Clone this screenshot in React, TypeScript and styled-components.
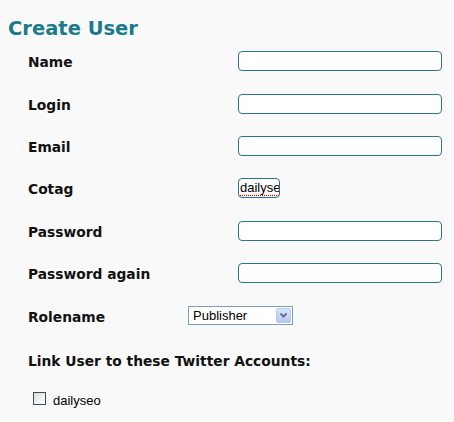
import React from "react";
import styled, { createGlobalStyle } from "styled-components";

const Global = createGlobalStyle`
  html, body { margin: 0; padding: 0; background: #f9f9f9; }
  body { font-family: "DejaVu Sans", Verdana, sans-serif; }
`;

const Page = styled.div`
  width: 454px;
  height: 422px;
  padding: 19px 0 0 8px;
  box-sizing: border-box;
  overflow: hidden;
`;

const Title = styled.h1`
  margin: 0 0 1px 0;
  font-family: "DejaVu Sans", Verdana, sans-serif;
  font-weight: bold;
  font-size: 19.5px;
  line-height: 20px;
  color: #1b7a8b;
`;

const Form = styled.div`
  padding-left: 20px;
  display: flex;
  flex-direction: column;
`;

const Row = styled.div<{ $labelWidth: number }>`
  height: 42.4px;
  display: grid;
  grid-template-columns: ${(p) => p.$labelWidth}px auto;
  align-items: center;
`;

const Label = styled.span`
  padding-top: 2px;
  font-family: "DejaVu Sans", Verdana, sans-serif;
  font-weight: bold;
  font-size: 13.8px;
  color: #111;
`;

const TextBox = styled.div<{ $w: number }>`
  width: ${(p) => p.$w}px;
  height: 20px;
  box-sizing: border-box;
  border: 1.5px solid #2b7489;
  border-radius: 4px;
  background: #fff;
  overflow: hidden;
  white-space: nowrap;
  font-family: "Liberation Sans", Arial, sans-serif;
  font-size: 13px;
  line-height: 17px;
  padding-left: 1px;
  color: #000;
`;

const Misspelt = styled.span`
  text-decoration: underline dotted #d00000;
  text-underline-offset: 2px;
`;

const Select = styled.div`
  width: 105px;
  height: 19px;
  box-sizing: border-box;
  border: 1px solid #7f9db9;
  background: #fff;
  display: flex;
  align-items: center;
  justify-content: space-between;
  padding: 0 1px 0 4px;
  font-family: "Liberation Sans", Arial, sans-serif;
  font-size: 13px;
  color: #000;
`;

const ArrowButton = styled.span`
  width: 15px;
  height: 15px;
  box-sizing: border-box;
  border: 1px solid #b6c9f0;
  border-radius: 2px;
  background: linear-gradient(180deg, #d9e5fc 0%, #c2d3f8 60%, #b4c7f2 100%);
  display: flex;
  align-items: center;
  justify-content: center;
`;

const Heading = styled.div`
  height: 46px;
  padding-top: 2px;
  box-sizing: border-box;
  display: flex;
  align-items: center;
  font-family: "DejaVu Sans", Verdana, sans-serif;
  font-weight: bold;
  font-size: 13.8px;
  color: #111;
`;

const CheckRow = styled.label`
  height: 30px;
  padding: 1px 0 0 5px;
  display: flex;
  align-items: center;
  gap: 7px;
  font-family: "Liberation Sans", Arial, sans-serif;
  font-size: 13px;
  color: #000;
`;

const CheckText = styled.span`
  padding-top: 3px;
`;

const Box = styled.span`
  width: 13px;
  height: 13px;
  box-sizing: border-box;
  border: 1px solid #3c4a5c;
  background: linear-gradient(135deg, #dcdcd7 0%, #f2f2ee 60%, #ffffff 100%);
`;

const fields: { label: string; w: number; labelWidth: number; value?: string }[] = [
  { label: "Name", w: 204, labelWidth: 210 },
  { label: "Login", w: 204, labelWidth: 210 },
  { label: "Email", w: 204, labelWidth: 210 },
  { label: "Cotag", w: 42, labelWidth: 210, value: "dailyseo" },
  { label: "Password", w: 204, labelWidth: 210 },
  { label: "Password again", w: 204, labelWidth: 210 },
];

export default function App() {
  return (
    <>
      <Global />
      <Page>
        <Title>Create User</Title>
        <Form>
          {fields.map((f) => (
            <Row key={f.label} $labelWidth={f.labelWidth}>
              <Label>{f.label}</Label>
              <TextBox $w={f.w}>{f.value && <Misspelt>{f.value}</Misspelt>}</TextBox>
            </Row>
          ))}
          <Row $labelWidth={160}>
            <Label>Rolename</Label>
            <Select>
              <span>Publisher</span>
              <ArrowButton>
                <svg width="7" height="5" viewBox="0 0 7 5">
                  <path d="M0.5 0.5 L3.5 3.5 L6.5 0.5" fill="none" stroke="#4d6185" strokeWidth="1.6" />
                </svg>
              </ArrowButton>
            </Select>
          </Row>
          <Heading>Link User to these Twitter Accounts:</Heading>
          <CheckRow>
            <Box />
            <CheckText>dailyseo</CheckText>
          </CheckRow>
        </Form>
      </Page>
    </>
  );
}
